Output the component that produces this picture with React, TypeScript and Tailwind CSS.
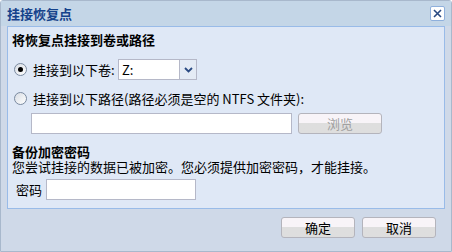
const font = "font-['SimSun','Noto_Sans_CJK_SC',sans-serif]";

function Radio({ checked }: { checked?: boolean }) {
  return (
    <span className="w-[13px] h-[13px] rounded-full border border-[#7a8aa0] bg-gradient-to-br from-[#d8dde4] to-white flex items-center justify-center shrink-0">
      {checked && <span className="w-[5px] h-[5px] rounded-full bg-black" />}
    </span>
  );
}

function Btn({ label, disabled, w }: { label: string; disabled?: boolean; w: string }) {
  return (
    <button
      className={`${w} h-[21px] rounded-[3px] border border-[#b4b4bc] bg-gradient-to-b from-[#f8f4f8] from-50% to-[#dedede] to-50% text-[13px] leading-none ${disabled ? "text-[#a0a0a0]" : "text-black"}`}
    >
      {label}
    </button>
  );
}

export default function App() {
  return (
    <div className={`w-[452px] h-[252px] flex flex-col bg-[#cfd9e8] border border-[#a8b8cc] rounded-t-[3px] ${font} text-[13px] leading-[15px] text-black`}>
      {/* Title */}
      <div className="h-[25px] flex items-center justify-between pl-[6px] pr-[6px] bg-[#c4d6e7]">
        <span className="font-bold text-[#15428b]">挂接恢复点</span>
        <span className="w-[15px] h-[15px] rounded-[2px] border border-[#8fb0dc] bg-white flex items-center justify-center">
          <svg width="9" height="9" viewBox="0 0 9 9">
            <path d="M1 1 L8 8 M8 1 L1 8" stroke="#2a4a82" strokeWidth="1.6" />
          </svg>
        </span>
      </div>

      {/* Body */}
      <div className="mx-[6px] h-[183px] border border-[#99bbe8] bg-[#dfe8f6] pl-[4px] pt-[5px] flex flex-col">
        <div className="font-bold h-[15px]">将恢复点挂接到卷或路径</div>

        <div className="flex items-center mt-[12px] h-[21px] pl-[2px]">
          <Radio checked />
          <span className="ml-[6px] w-[85px]">挂接到以下卷:</span>
          <div className="flex h-[21px] w-[79px] border border-[#b5b8c8] bg-white">
            <span className="flex-1 pl-[3px] leading-[19px]">Z:</span>
            <span className="w-[17px] border-l border-[#b5b8c8] bg-[#e4ebf5] flex items-center justify-center">
              <svg width="9" height="6" viewBox="0 0 9 6">
                <path d="M1 1 L4.5 4.5 L8 1" stroke="#2a4a82" strokeWidth="1.8" fill="none" />
              </svg>
            </span>
          </div>
        </div>

        <div className="flex items-center mt-[10px] h-[16px] pl-[2px]">
          <Radio />
          <span className="ml-[6px] whitespace-nowrap">挂接到以下路径(路径必须是空的 NTFS 文件夹):</span>
        </div>

        <div className="flex items-center mt-[7px] pl-[19px] gap-[6px]">
          <div className="w-[261px] h-[21px] border border-[#b5b8c8] bg-white" />
          <Btn label="浏览" disabled w="w-[84px]" />
        </div>

        <div className="font-bold h-[15px] mt-[10px]">备份加密密码</div>
        <div className="h-[15px] whitespace-nowrap">您尝试挂接的数据已被加密。您必须提供加密密码，才能挂接。</div>

        <div className="flex items-center mt-[5px] pl-[4px]">
          <span className="w-[30px]">密码</span>
          <div className="w-[150px] h-[21px] border border-[#b5b8c8] bg-white" />
        </div>
      </div>

      {/* Footer */}
      <div className="flex justify-end gap-[7px] pr-[15px] pt-[8px]">
        <Btn label="确定" w="w-[74px]" />
        <Btn label="取消" w="w-[74px]" />
      </div>
    </div>
  );
}
